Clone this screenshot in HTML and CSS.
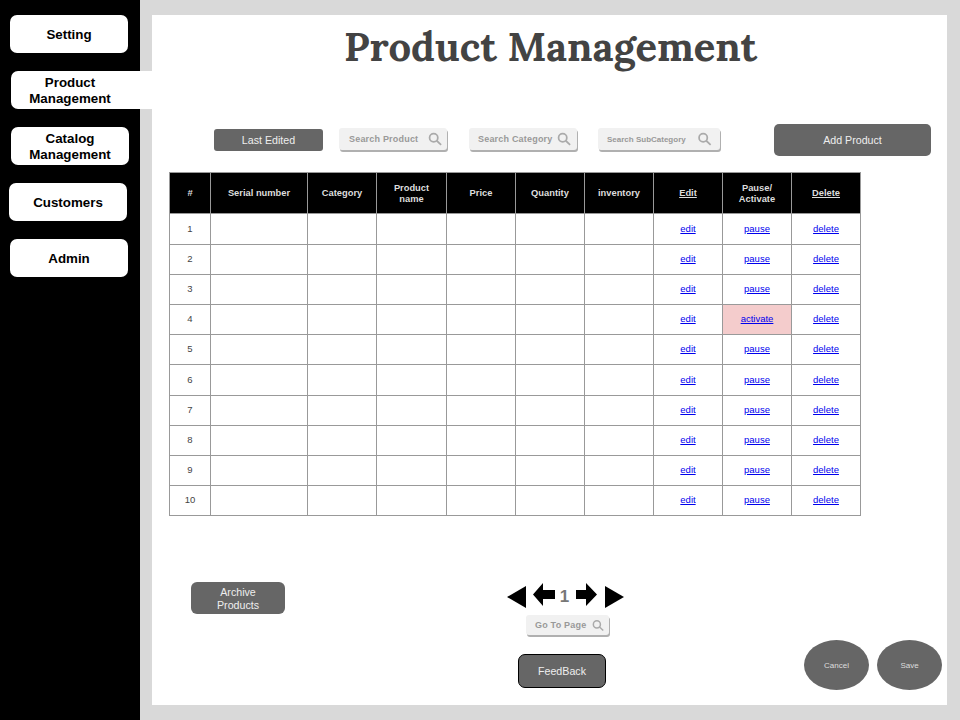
FILE: index.html
```html
<!DOCTYPE html>
<html lang="en">
<head>
<meta charset="utf-8">
<title>Product Management</title>
<link rel="stylesheet" href="styles.css">
</head>
<body>
<div class="app">
  <nav class="sidebar">
    <a class="nav-item nav-setting">Setting</a>
    <a class="nav-item nav-active">Product<br>Management</a>
    <a class="nav-item nav-catalog">Catalog<br>Management</a>
    <a class="nav-item nav-customers">Customers</a>
    <a class="nav-item nav-setting">Admin</a>
  </nav>
  <main class="panel">
    <h1 class="title">Product Management</h1>
    <div class="toolbar">
      <button class="btn btn-last">Last Edited</button>
      <div class="search search-product"><span>Search Product</span><svg class="lens" viewBox="0 0 16 16"><circle cx="6.5" cy="6.5" r="4.7"/><path d="M10 10l5 4.6"/></svg></div>
      <div class="search search-category"><span>Search Category</span><svg class="lens" viewBox="0 0 16 16"><circle cx="6.5" cy="6.5" r="4.7"/><path d="M10 10l5 4.6"/></svg></div>
      <div class="search search-sub"><span>Search SubCategory</span><svg class="lens" viewBox="0 0 16 16"><circle cx="6.5" cy="6.5" r="4.7"/><path d="M10 10l5 4.6"/></svg></div>
      <button class="btn btn-add">Add Product</button>
    </div>
    <table class="grid">
      <colgroup>
        <col class="c-num"><col class="c-serial"><col class="c-std"><col class="c-name"><col class="c-std"><col class="c-std"><col class="c-std"><col class="c-std"><col class="c-std"><col class="c-std">
      </colgroup>
      <thead>
        <tr><th>#</th><th>Serial number</th><th>Category</th><th>Product<br>name</th><th>Price</th><th>Quantity</th><th>inventory</th><th><u>Edit</u></th><th>Pause/<br>Activate</th><th><u>Delete</u></th></tr>
      </thead>
      <tbody>
        <tr class="row-tall"><td>1</td><td></td><td></td><td></td><td></td><td></td><td></td><td><a href="#">edit</a></td><td><a href="#">pause</a></td><td><a href="#">delete</a></td></tr>
        <tr><td>2</td><td></td><td></td><td></td><td></td><td></td><td></td><td><a href="#">edit</a></td><td><a href="#">pause</a></td><td><a href="#">delete</a></td></tr>
        <tr><td>3</td><td></td><td></td><td></td><td></td><td></td><td></td><td><a href="#">edit</a></td><td><a href="#">pause</a></td><td><a href="#">delete</a></td></tr>
        <tr><td>4</td><td></td><td></td><td></td><td></td><td></td><td></td><td><a href="#">edit</a></td><td class="paused"><a href="#">activate</a></td><td><a href="#">delete</a></td></tr>
        <tr><td>5</td><td></td><td></td><td></td><td></td><td></td><td></td><td><a href="#">edit</a></td><td><a href="#">pause</a></td><td><a href="#">delete</a></td></tr>
        <tr class="row-tall"><td>6</td><td></td><td></td><td></td><td></td><td></td><td></td><td><a href="#">edit</a></td><td><a href="#">pause</a></td><td><a href="#">delete</a></td></tr>
        <tr><td>7</td><td></td><td></td><td></td><td></td><td></td><td></td><td><a href="#">edit</a></td><td><a href="#">pause</a></td><td><a href="#">delete</a></td></tr>
        <tr><td>8</td><td></td><td></td><td></td><td></td><td></td><td></td><td><a href="#">edit</a></td><td><a href="#">pause</a></td><td><a href="#">delete</a></td></tr>
        <tr><td>9</td><td></td><td></td><td></td><td></td><td></td><td></td><td><a href="#">edit</a></td><td><a href="#">pause</a></td><td><a href="#">delete</a></td></tr>
        <tr><td>10</td><td></td><td></td><td></td><td></td><td></td><td></td><td><a href="#">edit</a></td><td><a href="#">pause</a></td><td><a href="#">delete</a></td></tr>
      </tbody>
    </table>
    <div class="footer">
      <div class="foot-left"><button class="btn btn-archive">Archive<br>Products</button></div>
      <div class="foot-center">
        <div class="pager">
          <svg class="tri" viewBox="0 0 19 22"><path d="M0 11L19 0v22z"/></svg>
          <svg class="arrow" viewBox="0 0 22 23"><path d="M0 11.5L10 0v7h12v9H10v7z"/></svg>
          <span class="page-no">1</span>
          <svg class="arrow" viewBox="0 0 22 23"><path d="M21 11.5L10 0v7H0v9h10v7z"/></svg>
          <svg class="tri tri-next" viewBox="0 0 19 22"><path d="M19 11L0 0v22z"/></svg>
        </div>
        <div class="search search-go"><span>Go To Page</span><svg class="lens" viewBox="0 0 16 16"><circle cx="6.5" cy="6.5" r="4.7"/><path d="M10 10l5 4.6"/></svg></div>
        <button class="btn btn-feedback">FeedBack</button>
      </div>
      <div class="foot-right">
        <button class="oval">Cancel</button>
        <button class="oval">Save</button>
      </div>
    </div>
  </main>
</div>
</body>
</html>
```

FILE: styles.css
```css
* { box-sizing: border-box; }
html, body { margin: 0; padding: 0; }
body { width: 960px; height: 720px; overflow: hidden; background: #d9d9d9; font-family: "Liberation Sans", Arial, sans-serif; }
.app { display: flex; height: 720px; }

.sidebar { width: 140px; flex: none; background: #000; padding-top: 15px; display: flex; flex-direction: column; gap: 18px; position: relative; z-index: 1; }
.nav-item { display: flex; align-items: center; justify-content: center; width: 118px; height: 38px; padding-top: 1px; background: #fff; color: #000; border-radius: 7px; font-size: 13.33px; font-weight: 700; line-height: 16px; text-align: center; }
.nav-setting { margin-left: 10px; }
.nav-catalog { margin-left: 11px; }
.nav-customers { margin-left: 9px; }
.nav-active { margin-left: 11px; width: 141px; border-radius: 7px 0 0 7px; padding-right: 23px; }

.panel { width: 795px; height: 690px; margin: 15px 0 0 12px; background: #fff; display: flex; flex-direction: column; }
.title { margin: 7px 0 0 192px; height: 79px; font-family: Lora, "Liberation Serif", serif; font-size: 40px; line-height: 50px; font-weight: 700; color: #434343; white-space: nowrap; }

.toolbar { display: flex; align-items: center; height: 32px; margin-top: 23px; padding-left: 62px; }
.btn { display: block; border: 0; padding: 0; background: #666; color: #eee; font-family: inherit; text-align: center; }
.btn-last { width: 109px; height: 22px; border-radius: 3px; font-size: 10.67px; }
.btn-add { width: 157px; height: 32px; border-radius: 5px; font-size: 10.67px; margin-left: 54px; }
.search { display: flex; align-items: center; height: 22px; background: #f1f1f1; border-radius: 3px; box-shadow: 1px 2px 0 #b0b0b0; color: #999; font-size: 9px; font-weight: 700; white-space: nowrap; letter-spacing: .2px; }
.toolbar .search { margin-bottom: 2px; }
.search-product { width: 108px; margin-left: 16px; padding-left: 10px; }
.search-category { width: 108px; margin-left: 22px; padding-left: 9px; }
.search-sub { width: 122px; margin-left: 21px; padding-left: 9px; font-size: 8px; letter-spacing: 0; }
.search-go { width: 83px; height: 20px; padding-left: 9px; margin-left: 20px; }
.lens { width: 14px; height: 14px; margin-left: auto; margin-right: 5px; fill: none; stroke: #aaa; stroke-width: 2; }
.search-category .lens { margin-right: 6px; }
.search-sub .lens { width: 15px; margin-right: 8px; }
.search-go .lens { width: 12px; height: 13px; }

.grid { table-layout: fixed; width: 692px; margin: 16px 0 0 17px; border-collapse: collapse; font-size: 9.5px; color: #444; }
.c-num { width: 41px; }
.c-serial { width: 97px; }
.c-std { width: 69px; }
.c-name { width: 70px; }
.grid th, .grid td { border: 1px solid #999; text-align: center; vertical-align: middle; }
.grid th { height: 41px; padding: 1px 0 0; background: #000; color: #ddd; font-size: 9.33px; font-weight: 700; line-height: 11px; }
.grid td { height: 30px; padding: 0 0 2px; }
.grid .row-tall td { height: 31px; padding-bottom: 1px; }
.grid a { color: #00e; }
.grid .paused { background: #f4cccc; }

.footer { display: grid; grid-template-columns: 354px 118px 1fr; flex: 1; margin-top: 66px; }
.foot-left { padding-left: 39px; }
.btn-archive { width: 94px; height: 32px; padding-top: 1px; border-radius: 6px; font-size: 10.67px; line-height: 13px; }
.foot-center { display: flex; flex-direction: column; align-items: flex-start; }
.pager { display: flex; align-items: flex-start; height: 33px; width: 118px; color: #777; }
.tri { width: 19px; height: 22px; margin: 4px 0 0 1px; flex: none; }
.arrow { width: 22px; height: 23px; margin: 1px 0 0 7px; flex: none; }
.tri-next { margin-left: 7px; }
.page-no { width: 21px; padding-right: 2px; text-align: center; font-size: 17px; line-height: 30px; font-weight: 700; }
.page-no + .arrow { margin-left: 0; }
.btn-feedback { width: 88px; height: 34px; margin: 19px 0 0 12px; border: 1px solid #000; border-radius: 7px; font-size: 10.67px; }
.foot-right { display: flex; gap: 8px; justify-content: flex-end; align-items: flex-start; padding: 58px 5px 0 0; }
.oval { width: 65px; height: 50px; border: 0; padding: 0; border-radius: 50%; background: #666; color: #ddd; font-family: inherit; font-size: 8px; }
```
